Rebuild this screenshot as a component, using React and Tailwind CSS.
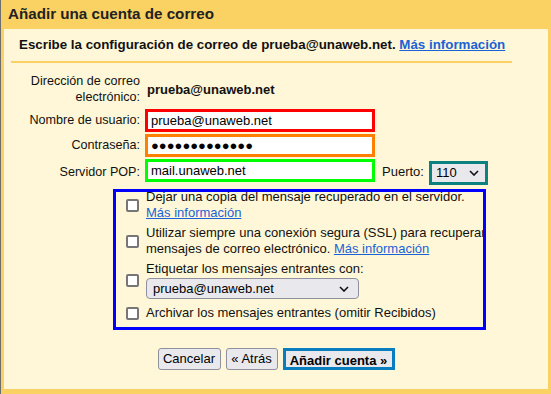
import React from "react";

const Chevron = () => (
  <svg width="10" height="6" viewBox="0 0 10 6" className="shrink-0">
    <path d="M1 1l4 4 4-4" fill="none" stroke="#111" strokeWidth="1.6" />
  </svg>
);

const Check = () => (
  <span className="w-[13px] h-[13px] shrink-0 rounded-[2px] border-2 border-[#767676] bg-white" />
);

const Link = ({ children }) => (
  <a href="#" className="text-[#1a62d6] underline">
    {children}
  </a>
);

const Field = ({ borderClass, value }) => (
  <input
    readOnly
    type="text"
    defaultValue={value}
    className={`w-[230px] h-[23px] border-[3px] ${borderClass} bg-white px-[3px] text-[13px] text-black outline-none`}
  />
);

export default function App() {
  return (
    <div className="w-[551px] h-[394px] bg-[#fad163] border-l border-l-[#6d6d6d] pl-[3px] pr-[3px] pb-[5px] flex flex-col font-['Liberation_Sans',Arial,sans-serif] text-[13px] text-[#111]">
      <div className="h-[29px] shrink-0 flex items-center pl-[4px]">
        <h1 className="text-[15.2px] font-bold text-[#222]">Añadir una cuenta de correo</h1>
      </div>

      <div className="flex-1 bg-[#fff7d7] flex flex-col">
        {/* subheader */}
        <div className="ml-[7px] w-[501px] border-b-2 border-[#fad163] pt-[8px] pb-[8px] pl-[8px] leading-[16px] text-[13.33px] font-bold whitespace-nowrap">
          Escribe la configuración de correo de prueba@unaweb.net.{" "}
          <Link>Más información</Link>
        </div>

        {/* form rows */}
        <div className="mt-[10px] grid grid-cols-[136px_auto] gap-x-[5px] items-center">
          <div className="text-right leading-[16px] h-[32px] text-[12.6px]">
            Dirección de correo
            <br />
            electrónico:
          </div>
          <div className="font-bold pl-[2px] pt-[2px]">prueba@unaweb.net</div>

          <div className="text-right mt-[4px] text-[12.6px]">Nombre de usuario:</div>
          <div className="mt-[4px] flex">
            <Field borderClass="border-[#ff0000]" value="prueba@unaweb.net" />
          </div>

          <div className="text-right mt-[2px] text-[12.6px]">Contraseña:</div>
          <div className="mt-[2px] flex">
            <Field borderClass="border-[#ff8000]" value="●●●●●●●●●●●●●" />
          </div>

          <div className="text-right mt-[2px] text-[12.6px]">Servidor POP:</div>
          <div className="mt-[2px] flex items-start">
            <Field borderClass="border-[#00ff00]" value="mail.unaweb.net" />
            <span className="ml-[7px] mt-[3px]">Puerto:</span>
            <div className="ml-[5px] mt-[2px] w-[59px] h-[24px] border-[3px] border-[#0b8180] bg-[#e9e9ed] flex items-center justify-between pl-[4px] pr-[6px] text-black">
              <span>110</span>
              <Chevron />
            </div>
          </div>
        </div>

        {/* options */}
        <div className="relative ml-[109px] mt-[4px] w-[373px] h-[141px] overflow-hidden">
          <div className="flex flex-col">
            <div className="flex items-center h-[32px]">
              <div className="ml-[13px] mr-[7px] flex"><Check /></div>
              <div className="leading-[16px] whitespace-nowrap">
                Dejar una copia del mensaje recuperado en el servidor.
                <br />
                <Link>Más información</Link>
              </div>
            </div>
            <div className="flex items-center h-[32px] mt-[4px]">
              <div className="ml-[13px] mr-[7px] flex"><Check /></div>
              <div className="leading-[16px] whitespace-nowrap">
                Utilizar siempre una conexión segura (SSL) para recuperar
                <br />
                mensajes de correo electrónico. <Link>Más información</Link>
              </div>
            </div>
            <div className="flex items-center h-[38px] mt-[4px]">
              <div className="ml-[13px] mr-[7px] flex"><Check /></div>
              <div className="flex flex-col">
                <span className="leading-[16px]">Etiquetar los mensajes entrantes con:</span>
                <div className="mt-[1px] w-[213px] h-[21px] rounded-[4px] border border-[#8f8f9d] bg-[#e9e9ed] flex items-center justify-between pl-[6px] pr-[9px] text-black">
                  <span>prueba@unaweb.net</span>
                  <Chevron />
                </div>
              </div>
            </div>
            <div className="flex items-center h-[16px] mt-[6px]">
              <div className="ml-[13px] mr-[7px] flex"><Check /></div>
              <span className="leading-[16px]">Archivar los mensajes entrantes (omitir Recibidos)</span>
            </div>
          </div>
          <div className="absolute inset-0 border-[3px] border-[#0000ff] pointer-events-none" />
        </div>

        {/* buttons */}
        <div className="mt-[18px] flex justify-center gap-[5px]">
          <button className="w-[63px] h-[22px] rounded-[3px] border border-[#8f8f9d] bg-[#e9e9ed] text-black">
            Cancelar
          </button>
          <button className="w-[52px] h-[22px] rounded-[3px] border border-[#8f8f9d] bg-[#e9e9ed] text-black">
            « Atrás
          </button>
          <button className="w-[112px] h-[22px] border-[3px] border-[#0a7dbf] bg-[#e9e9ed] font-bold text-black">
            Añadir cuenta »
          </button>
        </div>
      </div>
    </div>
  );
}
